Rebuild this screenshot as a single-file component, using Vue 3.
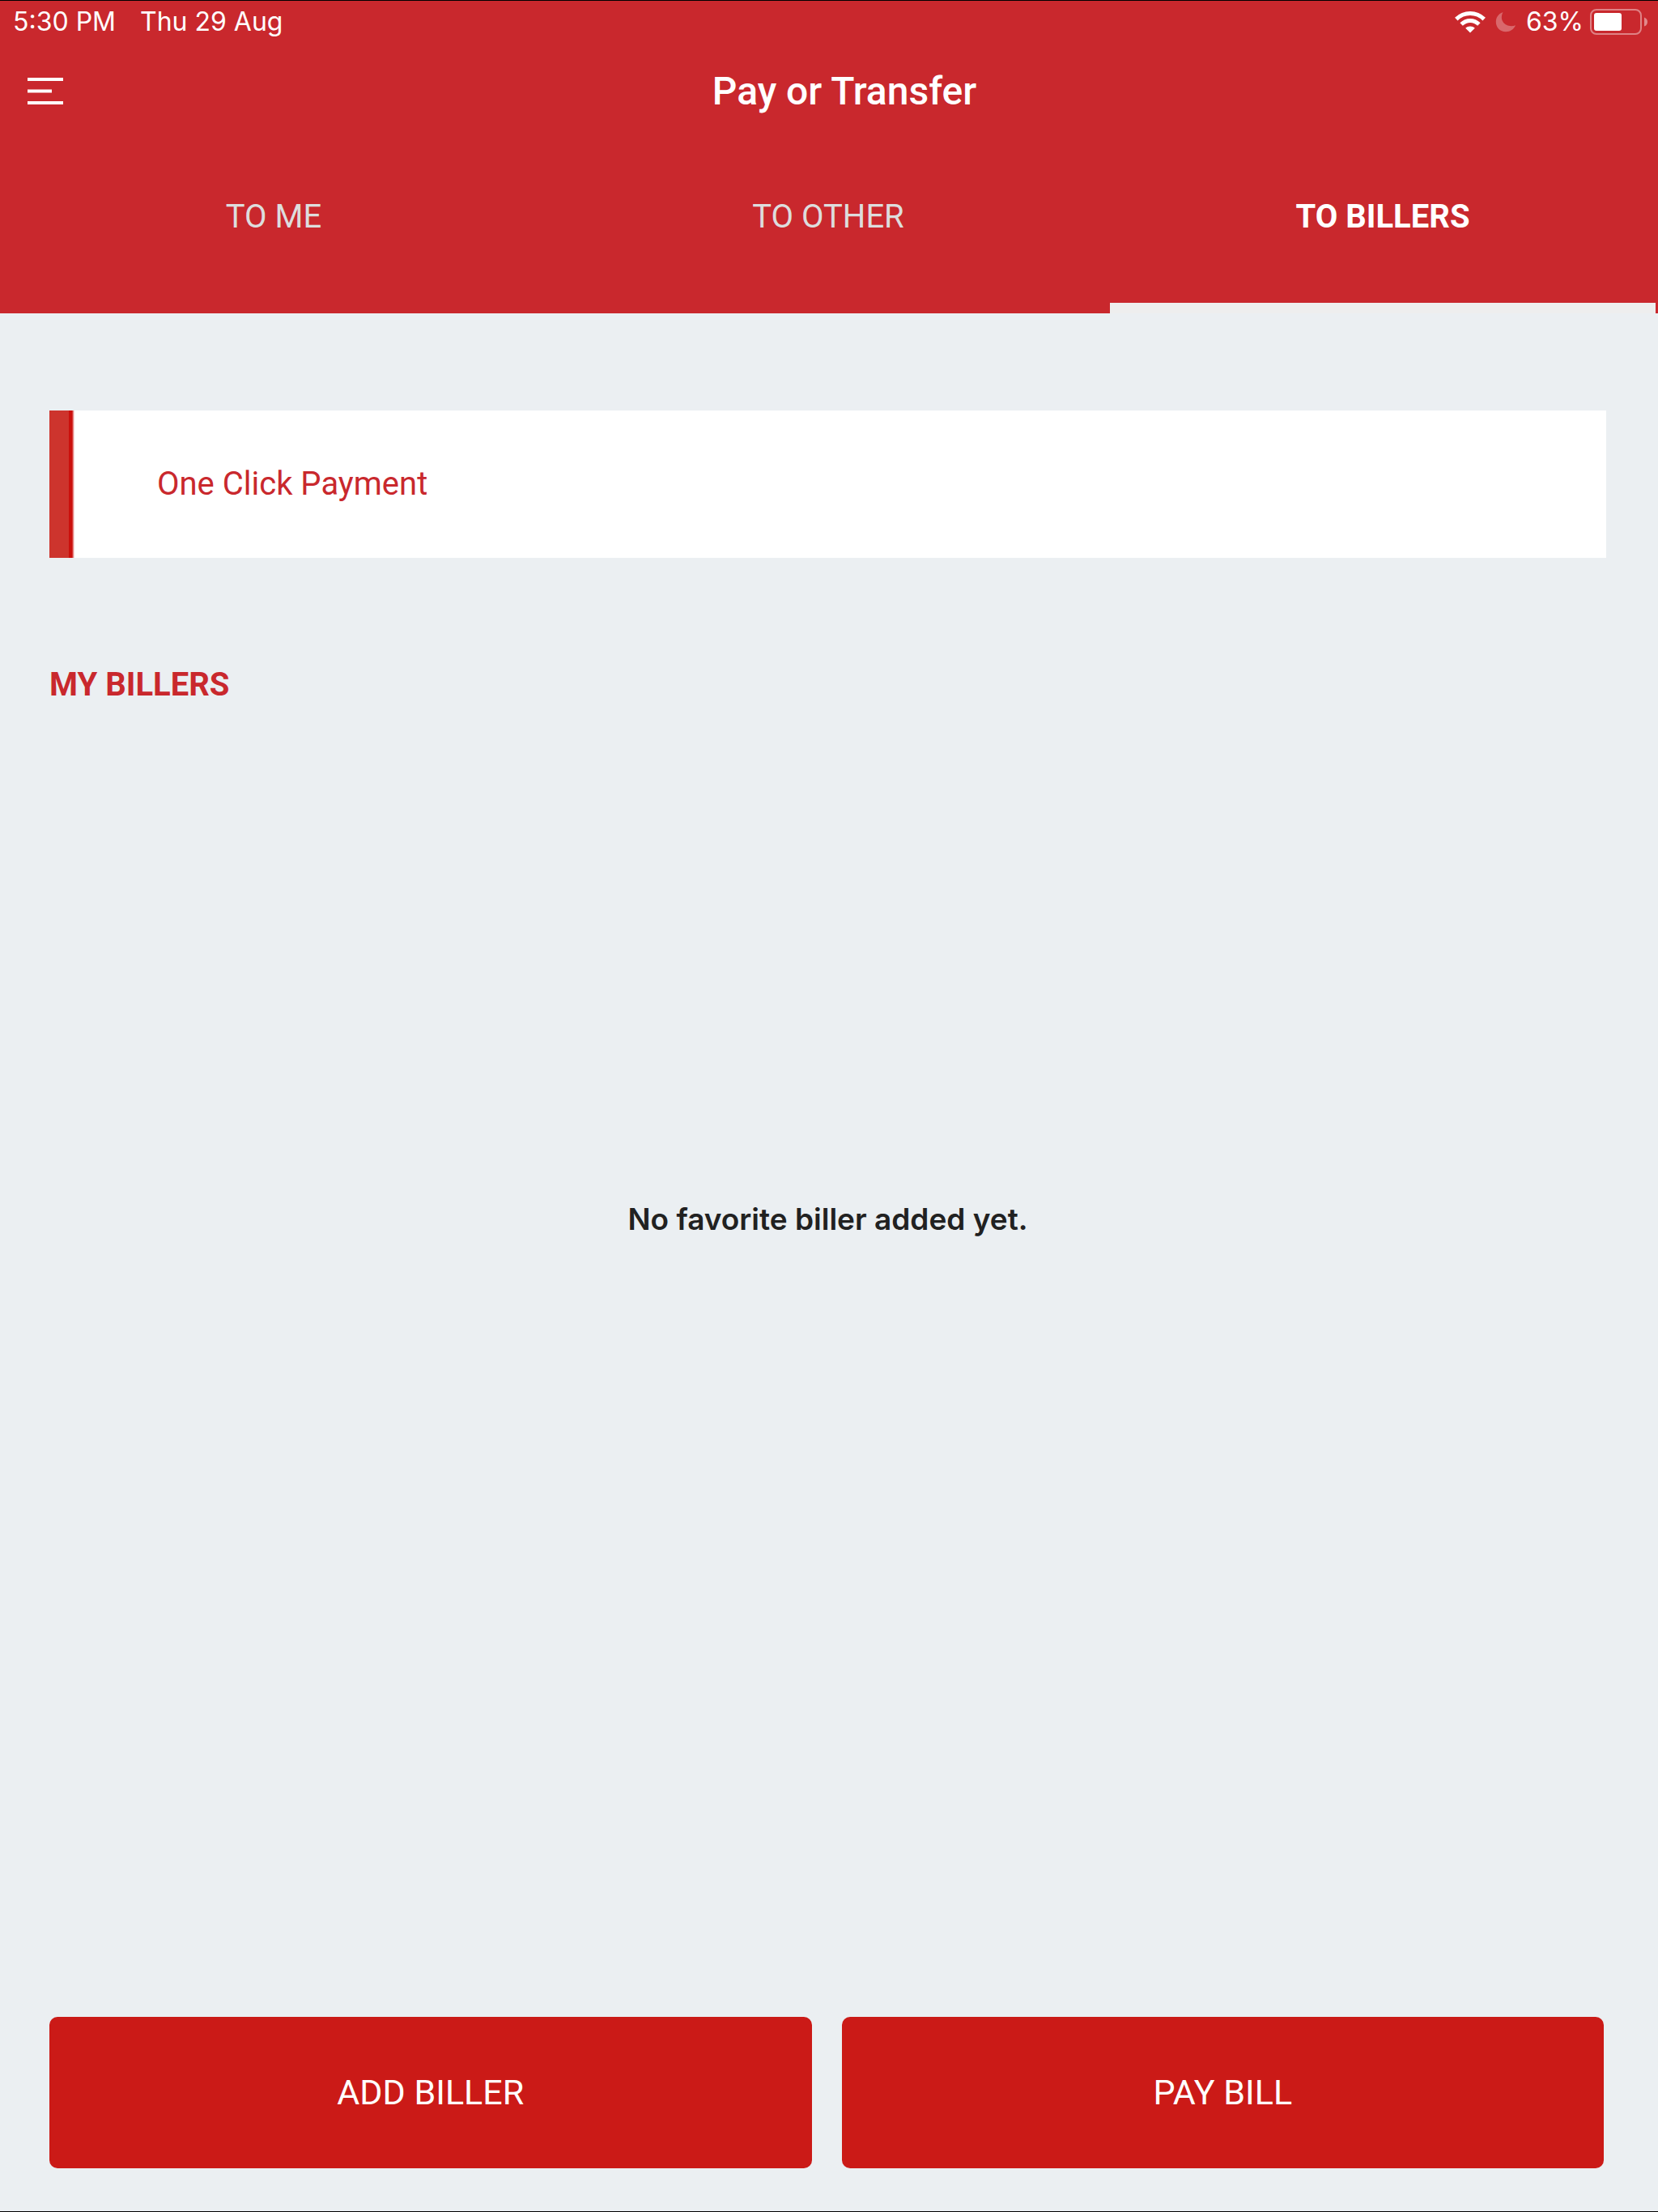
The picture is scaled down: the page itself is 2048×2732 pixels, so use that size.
<script setup>
import { ref } from 'vue'

const tabs = ['TO ME', 'TO OTHER', 'TO BILLERS']
const activeTab = ref('TO BILLERS')
</script>

<template>
  <div class="screen">
    <header class="header">
      <div class="status">
        <div class="status-group when">
          <span>5:30 PM</span>
          <span>Thu 29 Aug</span>
        </div>
        <div class="status-group">
          <svg class="wifi" viewBox="0 0 38 28" aria-hidden="true">
            <g fill="none" stroke="#fff" stroke-width="5">
              <path d="M1.8 10.6C11.5 1.1 26.5 1.1 36.2 10.6" />
              <path d="M8.1 17C14.5 11 23.5 11 29.9 17" />
            </g>
            <path d="M13.2 21.8C16.5 18.7 21.5 18.7 24.8 21.8L19 27.6Z" fill="#fff" />
          </svg>
          <svg class="moon" viewBox="0 0 26 26" aria-hidden="true">
            <path d="M9.500 1C3.500 3.200.8 8 .8 13C.8 20 6 25.200 13 25.200C18.500 25.200 23 22 25 17.200C15 21 3.500 13 9.500 1Z" fill="#fff" fill-opacity=".3" />
          </svg>
          <span>63%</span>
          <svg class="battery" viewBox="0 0 72 32" aria-hidden="true">
            <rect x="1" y="1" width="62" height="30" rx="7" fill="none" stroke="#fff" stroke-opacity=".42" stroke-width="2" />
            <rect x="5" y="5" width="34" height="22" rx="3" fill="#fff" />
            <path d="M67 10.5Q71 12 71 16T67 21.5Z" fill="#fff" fill-opacity=".45" />
          </svg>
        </div>
      </div>

      <div class="titlebar">
        <button class="menu" type="button" aria-label="Menu">
          <svg viewBox="0 0 44 36" aria-hidden="true">
            <path d="M0 3H44M0 17.5H30M0 32H44" stroke="#fff" stroke-width="4" />
          </svg>
        </button>
        <h1 class="title">Pay or Transfer</h1>
      </div>

      <nav class="tabs">
        <button
          v-for="tab in tabs"
          :key="tab"
          type="button"
          class="tab"
          :class="{ active: tab === activeTab }"
          @click="activeTab = tab"
        >{{ tab }}</button>
      </nav>
    </header>

    <main class="content">
      <button class="card" type="button">One Click Payment</button>
      <h2 class="section">MY BILLERS</h2>
      <p class="empty">No favorite biller added yet.</p>
    </main>

    <footer class="actions">
      <button class="action" type="button">ADD BILLER</button>
      <button class="action" type="button">PAY BILL</button>
    </footer>
  </div>
</template>

<style>
body {
  margin: 0;
}
</style>

<style scoped>
.screen {
  box-sizing: border-box;
  display: flex;
  flex-direction: column;
  min-height: 100vh;
  border-top: 1px solid #000;
  border-bottom: 1px solid #000;
  background: #ebeff2;
  font-family: Roboto, sans-serif;
  font-size: 40px;
  line-height: 48px;
}

button {
  margin: 0;
  padding: 0;
  border: 0;
  background: none;
  font: inherit;
  cursor: pointer;
}

.header {
  background: #c9282d;
  color: #fff;
}

.status {
  display: flex;
  justify-content: space-between;
  padding: 6px 12px 0 16px;
  font-family: Inter, sans-serif;
  font-size: 32px;
  line-height: 40px;
}

.status-group {
  display: flex;
  align-items: center;
}

.when {
  gap: 30px;
}

.wifi {
  width: 38px;
  height: 28px;
  margin-right: 12px;
}

.moon {
  width: 26px;
  height: 26px;
  margin-right: 12px;
}

.battery {
  width: 72px;
  height: 32px;
  margin-left: 8px;
}

.titlebar {
  display: grid;
  grid-template-columns: 44px 1fr;
  align-items: center;
  height: 132px;
  padding: 0 40px 0 34px;
}

.menu svg {
  display: block;
  width: 44px;
  height: 36px;
}

.title {
  margin: 0;
  font-size: 48px;
  font-weight: 500;
  text-align: center;
}

.tabs {
  display: grid;
  grid-template-columns: repeat(3, 1fr);
  gap: 11px;
  padding: 0 3px 0 1px;
}

.tab {
  height: 208px;
  padding-bottom: 18px;
  border-bottom: 13px solid transparent;
  color: #ddd;
}

.tab.active {
  border-bottom-color: #eee;
  color: #fff;
  font-weight: 700;
}

.content {
  flex: 1;
  display: flex;
  flex-direction: column;
  padding: 120px 64px 0 61px;
}

.card {
  height: 182px;
  padding-left: 109px;
  border-left: 24px solid #cd342d;
  background: linear-gradient(to right, #cb0f0c 4px, #fff 7px);
  color: #c9282d;
  text-align: left;
}

.section {
  margin: 133px 0 0;
  color: #c9282d;
  font-size: 40px;
  font-weight: 700;
}

.empty {
  margin: 612px 0 0;
  color: #212121;
  font-family: Inter, sans-serif;
  font-size: 37px;
  font-weight: 600;
  text-align: center;
}

.actions {
  display: grid;
  grid-template-columns: 1fr 1fr;
  gap: 37px;
  padding: 0 67px 53px 61px;
}

.action {
  height: 187px;
  padding-bottom: 2px;
  border-radius: 10px;
  background: #cb1a17;
  color: #fff;
  font-size: 43px;
}
</style>
